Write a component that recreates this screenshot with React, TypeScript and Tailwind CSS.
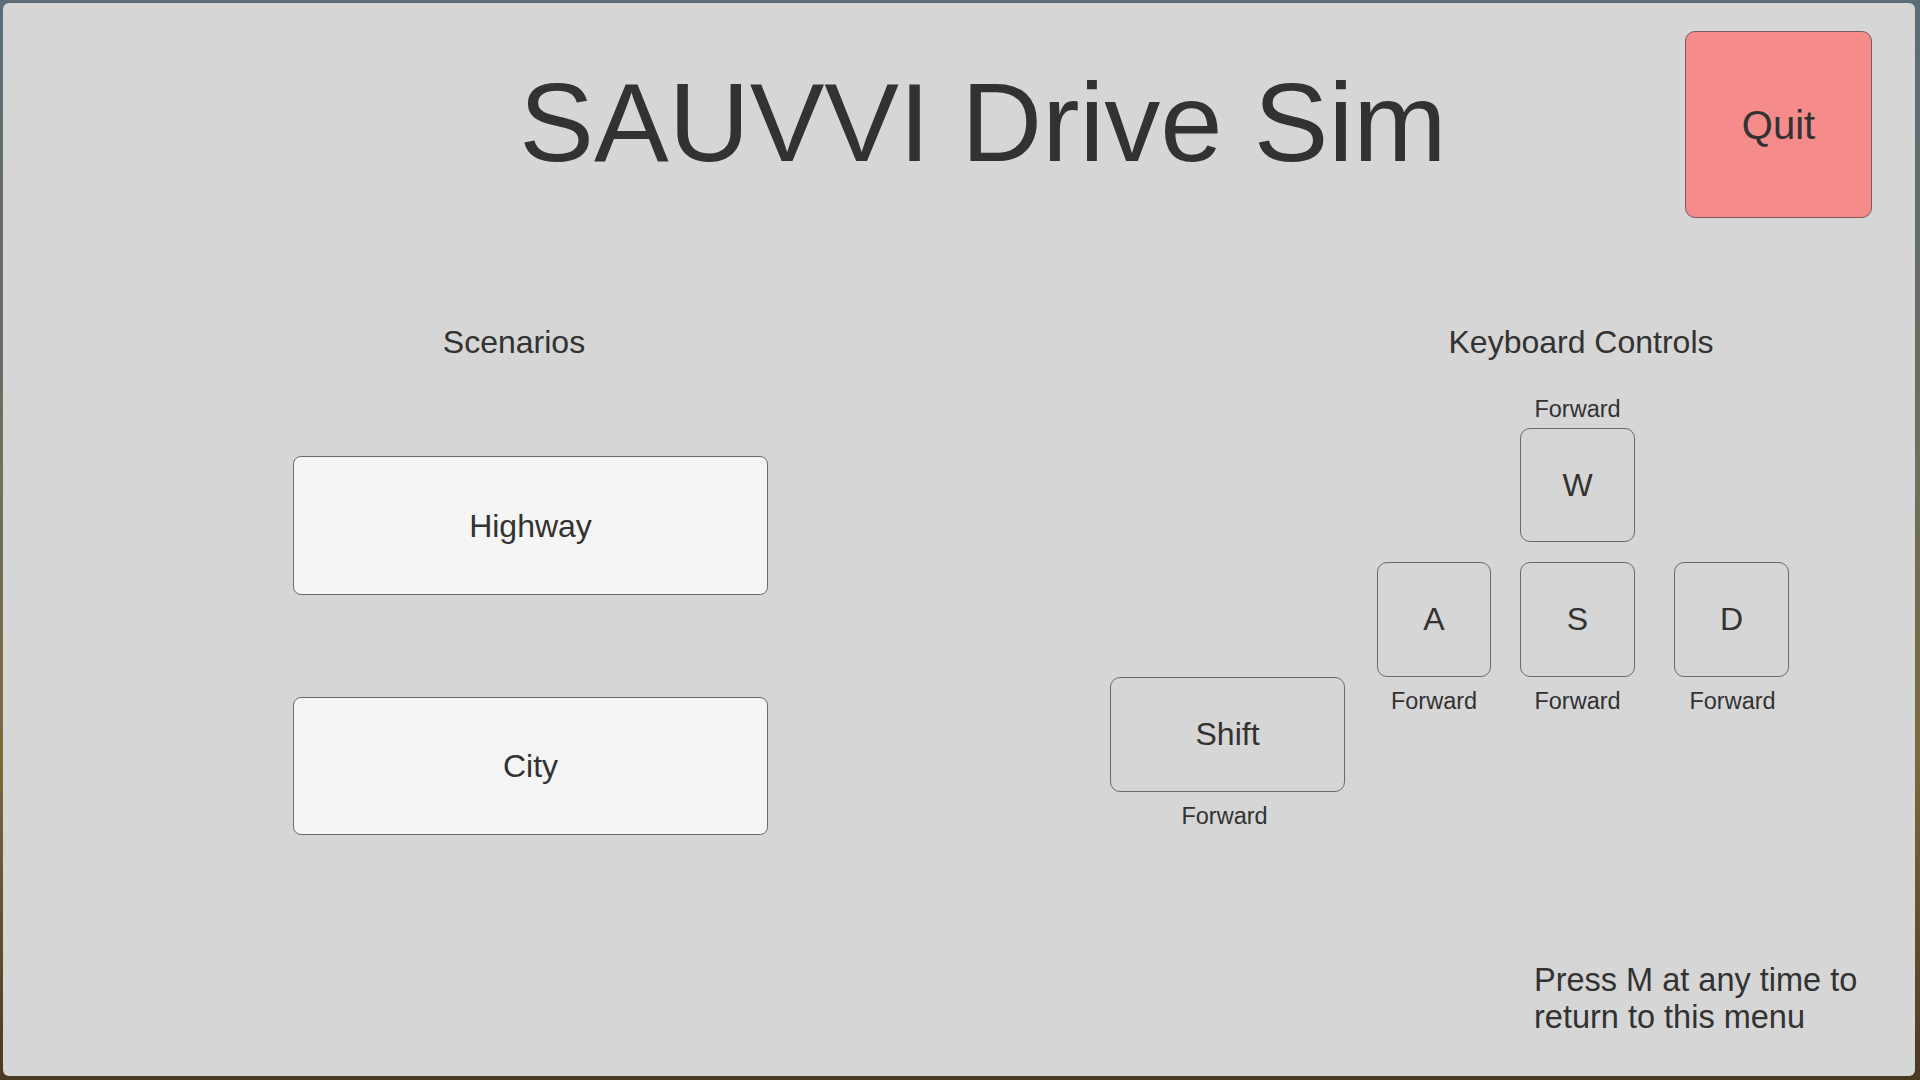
import React from "react";

function KeyCap({ label, w }: { label: string; w: string }) {
  return (
    <div
      className={`${w} h-[115px] rounded-[10px] border border-[#6a6a6a] flex items-center justify-center text-[32px] leading-none text-[#323232]`}
    >
      {label}
    </div>
  );
}

function Caption({ text }: { text: string }) {
  return (
    <div className="text-[23.5px] leading-none text-[#323232] text-center whitespace-nowrap">
      {text}
    </div>
  );
}

export default function App() {
  return (
    <div
      className="w-[1920px] h-[1080px] overflow-hidden bg-[linear-gradient(180deg,#5c6c78_0%,#6f6f5c_45%,#7b6a3e_70%,#4a3922_100%)] pt-[3px] pl-[3px] pr-[5px] pb-[4px]"
      style={{ fontFamily: '"Liberation Sans", Arial, sans-serif' }}
    >
      <div className="w-full h-full rounded-[6px] bg-[#d6d6d6] flex flex-col text-[#323232]">
        {/* Header */}
        <div className="flex items-start pt-[28px]">
          <div className="ml-[380px] w-[1200px] mt-[36px] text-center text-[112px] leading-none whitespace-nowrap">
            SAUVVI Drive Sim
          </div>
          <button className="ml-[102px] w-[187px] h-[187px] rounded-[10px] bg-[#f58b8b] border border-[#7a5c5c] flex items-center justify-center text-[40px] leading-none text-[#323232]">
            Quit
          </button>
        </div>

        {/* Body */}
        <div className="flex items-start pt-[108px]">
          {/* Scenarios */}
          <div className="ml-[290px] w-[475px] flex flex-col">
            <div className="pr-[33px] text-center text-[32px] leading-none">Scenarios</div>
            <button className="mt-[98px] h-[139px] w-full rounded-[8px] bg-[#f5f5f5] border border-[#6b6b6b] flex items-center justify-center text-[32px] leading-none text-[#323232]">
              Highway
            </button>
            <button className="mt-[102px] h-[138px] w-full rounded-[8px] bg-[#f5f5f5] border border-[#6b6b6b] flex items-center justify-center text-[32px] leading-none text-[#323232]">
              City
            </button>
          </div>

          {/* Keyboard controls */}
          <div className="ml-[342px] flex flex-col">
            <div className="ml-[271px] w-[400px] text-center text-[32px] leading-none whitespace-nowrap">
              Keyboard Controls
            </div>
            <div className="flex">
              <div className="ml-[410px] w-[115px] flex flex-col items-center">
                <div className="mt-[40px]">
                  <Caption text="Forward" />
                </div>
                <div className="mt-[6px] h-[114px] w-[115px] rounded-[10px] border border-[#6a6a6a] flex items-center justify-center text-[32px] leading-none">
                  W
                </div>
              </div>
            </div>
            <div className="flex items-start mt-[20px]">
              <div className="mt-[115px] w-[235px] flex flex-col items-center">
                <KeyCap label="Shift" w="w-[235px]" />
                <div className="mt-[13px] pr-[6px]">
                  <Caption text="Forward" />
                </div>
              </div>
              <div className="ml-[32px] w-[114px] flex flex-col items-center">
                <KeyCap label="A" w="w-[114px]" />
                <div className="mt-[13px]">
                  <Caption text="Forward" />
                </div>
              </div>
              <div className="ml-[29px] w-[115px] flex flex-col items-center">
                <KeyCap label="S" w="w-[115px]" />
                <div className="mt-[13px]">
                  <Caption text="Forward" />
                </div>
              </div>
              <div className="ml-[39px] w-[115px] flex flex-col items-center">
                <KeyCap label="D" w="w-[115px]" />
                <div className="mt-[13px] pl-[2px]">
                  <Caption text="Forward" />
                </div>
              </div>
            </div>
          </div>
        </div>

        {/* Footer note */}
        <div className="mt-auto mb-[40px] ml-[1531px] text-[32.5px] leading-[37px] whitespace-nowrap">
          Press M at any time to
          <br />
          return to this menu
        </div>
      </div>
    </div>
  );
}
